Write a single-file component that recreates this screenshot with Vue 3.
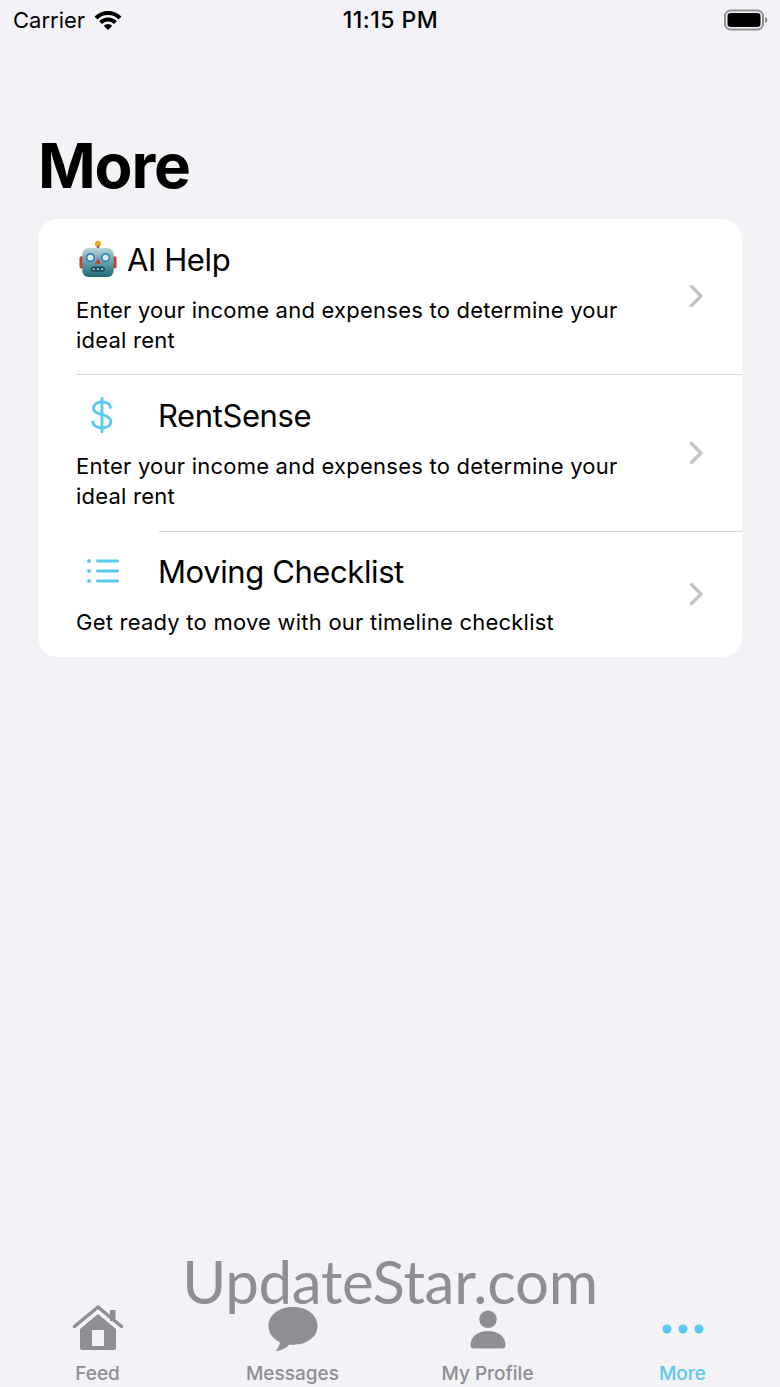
<script setup>
const rows = [
  { id: 'ai', title: 'AI Help', text: 'Enter your income and expenses to determine your ideal rent' },
  { id: 'rent', title: 'RentSense', text: 'Enter your income and expenses to determine your ideal rent' },
  { id: 'list', title: 'Moving Checklist', text: 'Get ready to move with our timeline checklist' },
]

const tabs = [
  { id: 'feed', label: 'Feed' },
  { id: 'messages', label: 'Messages' },
  { id: 'profile', label: 'My Profile' },
  { id: 'more', label: 'More' },
]
</script>

<template>
  <div class="page">
    <header class="status">
      <div class="status-left">
        <span>Carrier</span>
        <svg width="28" height="21" viewBox="0 0 28 21">
          <path d="M.57 6.570A19 19 0 0 1 27.430 6.570L24.610 9.390A15 15 0 0 0 3.390 9.390Z" fill="#000" />
          <path d="M5.160 11.160A12.500 12.500 0 0 1 22.840 11.160L20.010 13.990A8.500 8.500 0 0 0 7.990 13.990Z" fill="#000" />
          <path d="M9.760 15.760A6 6 0 0 1 18.240 15.760L14 20Z" fill="#000" />
        </svg>
      </div>
      <span class="clock">11:15 PM</span>
      <svg class="battery" width="44" height="22" viewBox="0 0 44 22">
        <rect x="1" y="1.500" width="38" height="19" rx="5.500" fill="none" stroke="#8e8e93" stroke-width="2" />
        <rect x="3.500" y="4" width="33" height="14" rx="3.200" fill="#000" />
        <path d="M41 8c1.600.5 2.400 1.600 2.400 3s-.8 2.500-2.400 3z" fill="#8e8e93" />
      </svg>
    </header>

    <h1 class="title">More</h1>

    <section class="card">
      <div v-for="row in rows" :key="row.id" class="row" :class="'row-' + row.id">
        <div class="row-body">
          <div class="row-head">
            <svg v-if="row.id === 'ai'" class="robot" width="38" height="38" viewBox="0 0 40 40">
              <defs>
                <linearGradient id="robotFace" x1="0" y1="0" x2="0" y2="1">
                  <stop offset="0" stop-color="#b9d3d8" />
                  <stop offset="0.55" stop-color="#5d9aa6" />
                  <stop offset="1" stop-color="#1f6a78" />
                </linearGradient>
              </defs>
              <circle cx="20" cy="4" r="3.200" fill="#f5a623" />
              <rect x="18.600" y="6" width="2.800" height="4" fill="#8a6d3b" />
              <rect x="0.500" y="17" width="5" height="13" rx="2" fill="#c9402f" />
              <rect x="34.500" y="17" width="5" height="13" rx="2" fill="#c9402f" />
              <rect x="3.500" y="8.500" width="33" height="30.500" rx="6.500" fill="url(#robotFace)" />
              <circle cx="12" cy="18.500" r="4" fill="#dff3f7" stroke="#2f7fc4" stroke-width="1.800" />
              <circle cx="28" cy="18.500" r="4" fill="#dff3f7" stroke="#2f7fc4" stroke-width="1.800" />
              <path d="M20 19l3 6h-6z" fill="#c9402f" />
              <rect x="12.500" y="28" width="15" height="5.500" rx="2.700" fill="#17505c" />
              <g fill="#e4edef">
                <circle cx="15.500" cy="30.700" r="1" />
                <circle cx="20" cy="30.700" r="1" />
                <circle cx="24.500" cy="30.700" r="1" />
              </g>
            </svg>
            <div v-else class="icon-slot">
              <svg v-if="row.id === 'rent'" width="26" height="36" viewBox="0 0 26 36">
                <path d="M21.500 10.500C21 6.800 17.500 5 13 5 8.200 5 4.500 7.300 4.500 11.200c0 3.800 3.200 5.300 8.500 6.500 5.500 1.300 8.800 2.800 8.800 6.800 0 4-3.800 6.300-8.800 6.300-5 0-8.700-2.100-9.200-6" fill="none" stroke="#5ac8ef" stroke-width="2.800" stroke-linecap="round" />
                <path d="M13 1v34" stroke="#5ac8ef" stroke-width="2.800" stroke-linecap="round" />
              </svg>
              <svg v-else width="33" height="26" viewBox="0 0 33 26">
                <g fill="#5ac8ef">
                  <circle cx="3" cy="3" r="2" />
                  <circle cx="3" cy="13" r="2" />
                  <circle cx="3" cy="23" r="2" />
                  <rect x="10" y="1.600" width="23" height="2.800" rx="1.400" />
                  <rect x="10" y="11.600" width="23" height="2.800" rx="1.400" />
                  <rect x="10" y="21.600" width="23" height="2.800" rx="1.400" />
                </g>
              </svg>
            </div>
            <span class="row-title">{{ row.title }}</span>
          </div>
          <p class="row-text">{{ row.text }}</p>
        </div>
        <svg class="chevron" width="15" height="24" viewBox="0 0 15 24">
          <path d="M2.500 2.500L12 12 2.500 21.500" fill="none" stroke="#c4c4c7" stroke-width="3.400" stroke-linecap="round" stroke-linejoin="round" />
        </svg>
      </div>
    </section>

    <nav class="tabs">
      <div v-for="tab in tabs" :key="tab.id" class="tab" :class="{ active: tab.id === 'more' }">
        <div class="tab-icon">
          <svg v-if="tab.id === 'feed'" width="52" height="50" viewBox="0 0 52 50">
            <path d="M38 6h5.500v11H38z" fill="#8e8e93" />
            <path d="M2.500 22.500L26 3l23.500 19.500" fill="none" stroke="#8e8e93" stroke-width="3.500" stroke-linecap="round" stroke-linejoin="round" />
            <path fill-rule="evenodd" d="M26 10l18 15v19a2 2 0 0 1-2 2H10a2 2 0 0 1-2-2V25zM20 26v16h12V26z" fill="#8e8e93" />
          </svg>
          <svg v-else-if="tab.id === 'messages'" width="50" height="46" viewBox="0 0 50 46">
            <path d="M25 1C11.500 1 .500 8.600.500 20c0 7.200 4.500 13 11.500 16.200-.4 3.500-2.300 6.500-4.500 8.800 5.500-.4 10.500-2.500 14-6.500 1.100.1 2.300.2 3.500.2 13.500 0 24.500-7.300 24.500-18.700S38.500 1 25 1z" fill="#8e8e93" />
          </svg>
          <svg v-else-if="tab.id === 'profile'" width="38" height="39" viewBox="0 0 38 40">
            <circle cx="19" cy="9.500" r="9" fill="#8e8e93" />
            <path d="M1 36c0-9 8-14.500 18-14.500S37 27 37 36c0 2-1 3.500-3 3.500H4c-2 0-3-1.500-3-3.500z" fill="#8e8e93" />
          </svg>
          <svg v-else width="42" height="10" viewBox="0 0 42 10">
            <circle cx="5" cy="5" r="4.500" fill="#5ac8ef" />
            <circle cx="21" cy="5" r="4.500" fill="#5ac8ef" />
            <circle cx="37" cy="5" r="4.500" fill="#5ac8ef" />
          </svg>
        </div>
        <span class="tab-label">{{ tab.label }}</span>
      </div>
    </nav>

    <div class="watermark">UpdateStar.com</div>
  </div>
</template>

<style scoped>
.page {
  position: relative;
  display: flex;
  flex-direction: column;
  height: 1387px;
  overflow: hidden;
  background: #f2f2f7;
  color: #000;
  font-family: Inter, "Liberation Sans", sans-serif;
}

.status {
  display: grid;
  grid-template-columns: 1fr auto 1fr;
  align-items: center;
  height: 40px;
  padding: 0 12px 0 13px;
  font-size: 22px;
}

.status-left {
  display: flex;
  align-items: center;
  gap: 9px;
}

.clock {
  font-size: 23px;
  font-weight: 500;
  letter-spacing: 0.5px;
}

.battery {
  justify-self: end;
}

.title {
  margin: 87px 0 0 38px;
  font-size: 62px;
  line-height: 78px;
  font-weight: 700;
  letter-spacing: -1.2px;
}

.card {
  margin: 14px 38px 0;
  background: #fff;
  border-radius: 20px;
}

.row {
  position: relative;
  display: flex;
  align-items: center;
  justify-content: space-between;
  padding: 0 38px;
}

.row-ai {
  height: 156px;
}

.row-rent {
  height: 157px;
}

.row-list {
  height: 125px;
}

.row-ai::after,
.row-rent::after {
  content: "";
  position: absolute;
  right: 0;
  bottom: 0;
  height: 1px;
  background: #d6d6d9;
}

.row-ai::after {
  left: 38px;
}

.row-rent::after {
  left: 121px;
}

.row-body {
  align-self: flex-start;
  width: 580px;
  padding-top: 20px;
}

.row-list .row-body {
  padding-top: 19px;
}

.row-head {
  display: flex;
  align-items: center;
  height: 40px;
}

.robot {
  margin: 0 10px 0 3px;
}

.icon-slot {
  display: flex;
  align-items: center;
  justify-content: center;
  width: 52px;
  margin-right: 30px;
}

.row-title {
  font-size: 31px;
  letter-spacing: -0.4px;
}

.row-text {
  margin: 16px 0 0;
  font-size: 22px;
  line-height: 30px;
  letter-spacing: 0.23px;
}

.chevron {
  margin-bottom: 2px;
}

.tabs {
  display: grid;
  grid-template-columns: repeat(4, 195px);
  margin-top: auto;
  height: 85px;
}

.tab {
  display: flex;
  flex-direction: column;
  align-items: center;
  color: #8e8e93;
}

.tab.active {
  color: #5ac8ef;
}

.tab-icon {
  display: flex;
  align-items: center;
  justify-content: center;
  height: 54px;
}

.tab-label {
  margin-top: 5px;
  font-size: 19px;
  font-weight: 500;
  line-height: 26px;
}

.watermark {
  position: absolute;
  left: 0;
  right: 0;
  top: 1243px;
  text-align: center;
  font-family: Lato, sans-serif;
  font-size: 60px;
  font-weight: 400;
  letter-spacing: -0.3px;
  line-height: 76px;
  color: #8e8e93;
}
</style>
